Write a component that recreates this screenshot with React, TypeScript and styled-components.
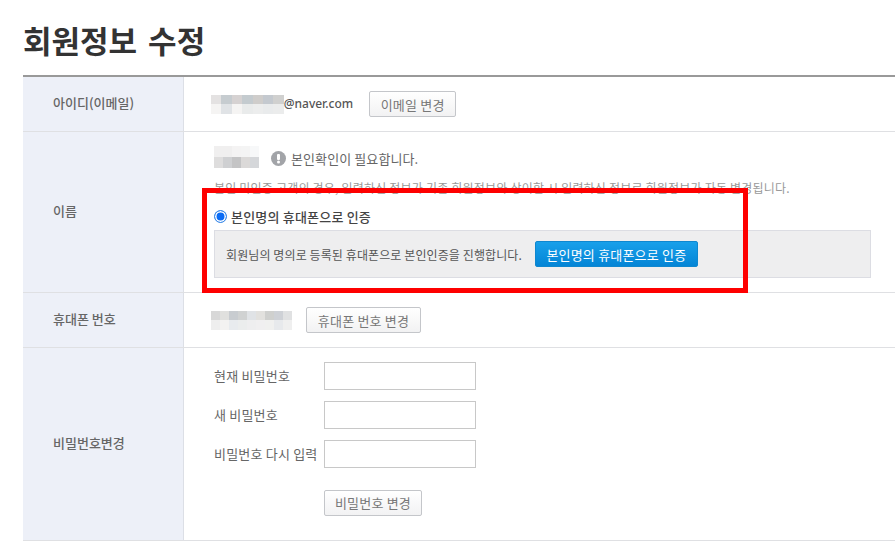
import React from "react";
import styled, { createGlobalStyle } from "styled-components";

const GlobalStyle = createGlobalStyle`
  html, body {
    margin: 0;
    padding: 0;
    background: #fff;
    overflow: hidden;
  }
  body {
    font-family: "Noto Sans CJK KR", "Noto Sans", sans-serif;
    color: #555;
  }
`;

const EMAIL_BLUR = [
  ["#e4e2e2", "#c6ccd0", "#d6d2d2", "#c4cbcf", "#cfcdcb", "#c4c9cf", "#d0d0cf"],
  ["#f5f4f3", "#e0e3e6", "#f5f4f3", "#e9ebeb", "#eceded", "#e9ebec", "#ebecec"],
];
const NAME_BLUR = [
  ["#f0efef", "#f0efef", "#f4f3f3", "#f4f4f4", "#f7f8f9"],
  ["#dedddd", "#cfd0d2", "#c4c4c5", "#dbd9d8", "#d5d7da"],
];
const PHONE_BLUR = [
  ["#d8d8d8", "#e0e0de", "#c8ccd0", "#d0d2d2", "#e0e3e6", "#e2e1de", "#cfd0ce", "#ced1d6", "#e0e1e2"],
  ["#eeeeee", "#f3f2f1", "#e8ebee", "#ebeded", "#eeeeef", "#f0eff0", "#f0f0ef", "#e7e9ec", "#efefef"],
];

const PASSWORD_FIELDS = ["현재 비밀번호", "새 비밀번호", "비밀번호 다시 입력"];

const Mosaic = ({ rows, cellWidth, cellHeight }: { rows: string[][]; cellWidth: number; cellHeight: number }) => (
  <MosaicGrid $cols={rows[0].length} $w={cellWidth} $h={cellHeight}>
    {rows.flat().map((color, i) => (
      <MosaicCell key={i} $color={color} />
    ))}
  </MosaicGrid>
);

const NoticeIcon = () => (
  <svg width="15" height="15" viewBox="0 0 15 15">
    <circle cx="7.5" cy="7.5" r="7.5" fill="#a2a4a8" />
    <rect x="6" y="3" width="3" height="6" rx="1" fill="#fff" />
    <circle cx="7.5" cy="11" r="1.5" fill="#fff" />
  </svg>
);

export default function App() {
  return (
    <Page>
      <GlobalStyle />
      <Title>회원정보 수정</Title>
      <Table>
        <Row>
          <LabelCell>아이디(이메일)</LabelCell>
          <ValueCell>
            <EmailLine>
              <Mosaic rows={EMAIL_BLUR} cellWidth={10.4} cellHeight={9.5} />
              <EmailDomain>@naver.com</EmailDomain>
              <GrayButton $ml={16} $width={87}>이메일 변경</GrayButton>
            </EmailLine>
          </ValueCell>
        </Row>
        <Row>
          <LabelCell>이름</LabelCell>
          <NameCell>
            <NameLine>
              <Mosaic rows={NAME_BLUR} cellWidth={9} cellHeight={11} />
              <NoticeGroup>
                <NoticeIcon />
                <NoticeText>본인확인이 필요합니다.</NoticeText>
              </NoticeGroup>
            </NameLine>
            <HelpText>본인 미인증 고객의 경우, 입력하신 정보가 기존 회원정보와 상이할 시 입력하신 정보로 회원정보가 자동 변경됩니다.</HelpText>
            <RadioLine>
              <Radio type="radio" defaultChecked name="auth" />
              <RadioLabel>본인명의 휴대폰으로 인증</RadioLabel>
            </RadioLine>
            <AuthBox>
              <AuthText>회원님의 명의로 등록된 휴대폰으로 본인인증을 진행합니다.</AuthText>
              <BlueButton>본인명의 휴대폰으로 인증</BlueButton>
            </AuthBox>
          </NameCell>
        </Row>
        <Row>
          <LabelCell>휴대폰 번호</LabelCell>
          <ValueCell>
            <EmailLine>
              <Mosaic rows={PHONE_BLUR} cellWidth={9} cellHeight={9.5} />
              <GrayButton $ml={14} $width={115}>휴대폰 번호 변경</GrayButton>
            </EmailLine>
          </ValueCell>
        </Row>
        <Row>
          <LabelCell>비밀번호변경</LabelCell>
          <PasswordCell>
            {PASSWORD_FIELDS.map((label) => (
              <FieldRow key={label}>
                <FieldLabel>{label}</FieldLabel>
                <FieldInput type="password" />
              </FieldRow>
            ))}
            <SubmitRow>
              <GrayButton $ml={0} $width={98}>비밀번호 변경</GrayButton>
            </SubmitRow>
          </PasswordCell>
        </Row>
      </Table>
      <Highlight />
    </Page>
  );
}

const Page = styled.div`
  position: relative;
  width: 895px;
  height: 542px;
  padding: 19px 0 0 23px;
  box-sizing: border-box;
  overflow: hidden;
`;

const Title = styled.h1`
  margin: 0 0 14px;
  font-size: 31px;
  line-height: 42px;
  font-weight: 700;
  word-spacing: 4px;
  color: #333;
`;

const Table = styled.div`
  border-top: 2px solid #999;
`;

const Row = styled.div`
  display: flex;
  border-bottom: 1px solid #dfe0e3;
`;

const LabelCell = styled.div`
  width: 161px;
  flex: none;
  box-sizing: border-box;
  padding: 0 0 4px 30px;
  display: flex;
  align-items: center;
  background: #edf0f8;
  border-right: 1px solid #dcdfe6;
  font-size: 13px;
  font-weight: 500;
  color: #666;
`;

const ValueCell = styled.div`
  flex: 1;
  height: 54px;
  display: flex;
  align-items: center;
  padding-left: 27px;
`;

const EmailLine = styled.div`
  display: flex;
  align-items: center;
`;

const MosaicGrid = styled.div<{ $cols: number; $w: number; $h: number }>`
  display: grid;
  grid-template-columns: repeat(${(p) => p.$cols}, ${(p) => p.$w}px);
  grid-auto-rows: ${(p) => p.$h}px;
`;

const MosaicCell = styled.div<{ $color: string }>`
  background: ${(p) => p.$color};
`;

const EmailDomain = styled.span`
  margin: 0 0 2px 0;
  font-family: "Noto Sans", sans-serif;
  font-size: 12px;
  font-weight: 500;
  color: #555;
`;

const GrayButton = styled.button<{ $ml: number; $width: number }>`
  margin-left: ${(p) => p.$ml}px;
  width: ${(p) => p.$width}px;
  height: 26px;
  padding: 0;
  border: 1px solid #c4c6ca;
  border-radius: 2px;
  background: linear-gradient(#fff, #f2f2f3);
  font-family: inherit;
  font-size: 13px;
  letter-spacing: 0.2px;
  color: #777;
`;

const NameCell = styled.div`
  flex: 1;
  height: 160px;
  box-sizing: border-box;
  padding: 13px 24px 0 30px;
`;

const NameLine = styled.div`
  display: flex;
  align-items: flex-end;
  height: 23px;
`;

const NoticeGroup = styled.div`
  display: flex;
  align-items: center;
  gap: 5px;
  margin-left: 12px;
`;

const NoticeText = styled.span`
  font-size: 13px;
  letter-spacing: 0.1px;
  color: #666;
`;

const HelpText = styled.p`
  margin: 12px 0 0;
  font-size: 12px;
  line-height: 16px;
  letter-spacing: 0.2px;
  white-space: nowrap;
  color: #999;
`;

const RadioLine = styled.div`
  display: flex;
  align-items: center;
  margin-top: 11px;
  height: 18px;
`;

const Radio = styled.input`
  appearance: none;
  width: 13px;
  height: 13px;
  margin: 0 4px 0 0;
  box-sizing: border-box;
  border: 1px solid #3d8be6;
  border-radius: 50%;
  background: #0a6cf5;
  box-shadow: inset 0 0 0 1.5px #fff;
`;

const RadioLabel = styled.label`
  font-size: 13px;
  font-weight: 500;
  letter-spacing: 0.2px;
  color: #444;
`;

const AuthBox = styled.div`
  display: flex;
  align-items: center;
  height: 48px;
  margin-top: 5px;
  padding-left: 11px;
  box-sizing: border-box;
  background: #eeeeef;
  border: 1px solid #dcdde3;
`;

const AuthText = styled.span`
  font-size: 12px;
  letter-spacing: 0.1px;
  color: #555;
`;

const BlueButton = styled.button`
  margin-left: 13px;
  width: 163px;
  height: 26px;
  padding: 0;
  border: 1px solid #0f87cf;
  border-radius: 2px;
  background: linear-gradient(#18a0ea, #0485d6);
  font-family: inherit;
  font-size: 13px;
  letter-spacing: 0.2px;
  color: #fff;
`;

const PasswordCell = styled.div`
  flex: 1;
  height: 192px;
  box-sizing: border-box;
  padding: 14px 0 0 30px;
`;

const FieldRow = styled.div`
  display: flex;
  align-items: center;
  margin-bottom: 11px;
`;

const FieldLabel = styled.span`
  width: 110px;
  margin-bottom: 2px;
  font-size: 13px;
  letter-spacing: 0.2px;
  white-space: nowrap;
  color: #666;
`;

const FieldInput = styled.input`
  width: 152px;
  height: 28px;
  box-sizing: border-box;
  border: 1px solid #c8c8c8;
  outline: none;
`;

const SubmitRow = styled.div`
  padding: 10px 0 0 110px;
`;

const Highlight = styled.div`
  position: absolute;
  left: 202px;
  top: 188px;
  width: 546px;
  height: 105px;
  box-sizing: border-box;
  border: 5px solid #fe0000;
  pointer-events: none;
`;
